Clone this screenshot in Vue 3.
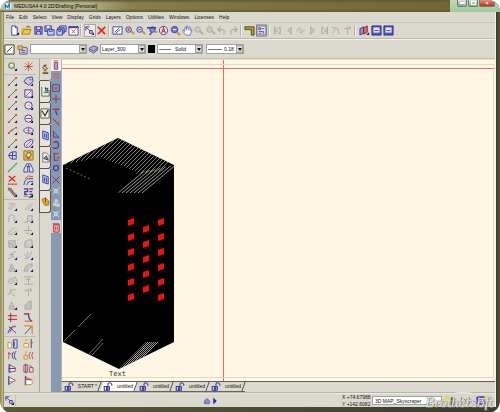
<script setup>
import { ref } from 'vue'

const N = '#3a3da6'
const R = '#e23c34'
const K = '#55555a'
const G = '#a9a8a2'
const Y = '#e0b020'
const L = '#c9cbee'

// Each glyph is a list of [path, stroke, fill, stroke width] on a 12 x 12 grid.
const mark = ['M11 8v3H8z', 'none', '#15156b']
const glyphs = {
  newDoc: [['M3 1h4l2 2v8H3z', N, '#fff'], ['M7 1v2h2', N, 'none'], mark],
  open: [['M1 10V4h3l1-1h4v2', Y, '#f5d76a'], ['M1 10l2-5h8l-2 5z', '#a87c10', '#f2c83c'], ['M6 2q3-2 4 1', N, 'none']],
  save: [['M2 2h8v8H2z', N, '#8c8fd8'], ['M4 2h4v3H4z', N, '#fff'], ['M4 10V7h4v3', N, L]],
  saveAs: [['M1 1h7v6H1z', N, '#8c8fd8'], ['M3 1h3v2H3z', 'none', '#fff'], ['M4 5h7v6H4z', N, L], ['M6 5h3v2H6z', N, '#fff']],
  saveAll: [['M4 1h7v6H4z', N, L], ['M2 3h7v6H2z', N, '#8c8fd8'], ['M1 5h6v6H1z', N, L], ['M3 5h2v2H3z', N, '#fff']],
  close: [['M1 2h10v9H1z', '#4a4a78', '#fff'], ['M1 2h10v1H1z', N, N], ['M4 5l4 4M8 5l-4 4', R, 'none']],
  select: [['M2 6V2h4M2 2l5 5', N, 'none'], ['M6 6h3v3H6z', N, L], mark],
  del: [['M2 2l8 8M10 2L2 10', '#e8261c', 'none', 1.8]],
  sheet: [['M1 2h10v8H1z', N, '#fff'], ['M3 8l5-5M4 9l5-4', N, 'none']],
  zoomIn: [['M8 5a3 3 0 1 1-6 0a3 3 0 1 1 6 0', N, L], ['M8 7l3 3', '#c09020', 'none', 2], ['M3.5 5h3M5 3.5v3', R, 'none']],
  zoomOut: [['M8 5a3 3 0 1 1-6 0a3 3 0 1 1 6 0', N, L], ['M8 7l3 3', '#c09020', 'none', 2], ['M3.5 5h3', R, 'none']],
  zoomBack: [['M9 5a3 3 0 1 1-6 0a3 3 0 1 1 6 0', N, '#8c8fd8'], ['M0 3h10M5 8l-2 3', N, 'none', 1.5], ['M8 7l3 1', '#c09020', 'none', 2]],
  zoomAll: [['M10.5 6a4.5 4.5 0 1 1-9 0a4.5 4.5 0 1 1 9 0', N, '#eceafc'], ['M4 9l2-6l2 6M5 7h3', R, 'none', 1.3]],
  zoomWin: [['M8.5 5a3.5 3.5 0 1 1-7 0a3.5 3.5 0 1 1 7 0', N, '#7679cf'], ['M8 8l3 3', '#c09020', 'none', 2], ['M3 5h4', '#fff', 'none']],
  pan: [['M4 11L1 7V5l2 2V3l1-1l1 3V1h1l1 4l1-3h1v4l1-1h1l-2 6z', '#5d60b8', '#f4f4ff', 0.8]],
  gZoom: [['M8 5a3 3 0 1 1-6 0a3 3 0 1 1 6 0', G, '#cbcac4'], ['M8 7l3 3', G, 'none', 2]],
  undo: [['M5 2L2 5l3 3M2 5h5q4 2 1 5', G, 'none', 1.2]],
  redo: [['M7 2l3 3l-3 3M10 5H5q-4 2-1 5', G, 'none', 1.2]],
  ruler: [['M1 2h10v9H8V5H1z', '#4a4418', '#b9a12c']],
  panel: [['M1 1h10v10H1z', '#4c4f86', '#e6e6f4'], ['M3 3h2v2H3zM6 4h3M3 7h5M3 9h3M8 7v2h1', '#4c4f86', 'none']],
  first: [['M3 2v8', G, 'none', 1.5], ['M9 2v8L4 6z', G, '#d8d7d0']],
  prev: [['M8 2v8L4 6z', G, '#c8c7c0']],
  loop: [['M2 7q0-3 3-3h1l-2-2M10 5q0 3-3 3H6l2 2M5 8l3-4', G, 'none']],
  next: [['M4 2v8l4-4z', G, '#c8c7c0']],
  last: [['M9 2v8', G, 'none', 1.5], ['M3 2v8l5-4z', G, '#d8d7d0']],
  walk: [['M2 3h5l3 3M3 9l3-5M8 3l2 7', G, 'none']],
  tee: [['M2 4l8-1M5 2l1 3v5M8 1l1 4', G, 'none']],
  cube: [['M1 4l4-2v7l-4 2z', N, '#8a8fc9'], ['M5 3l4-2v7L5 10z', '#8d2430', '#e86258'], mark],
  dialog: [['M1 1h10v10H1z', '#2c2f8c', '#5457b8'], ['M3 3h6v5H3z', '#b9bbed', '#eceeff'], ['M4 6h4', N, 'none']],
  // Drawing palette
  zoomPal: [['M8 5a3 3 0 1 1-6 0a3 3 0 1 1 6 0', '#6a9a60', '#dcead6', 1.5], ['M8 8l2 2', '#508048', 'none'], mark],
  burst: [['M2 2l8 8M10 2l-8 8M6 1v10M1 6h10', R, 'none', 0.8], ['M5 5h2v2H5z', 'none', '#a84c20']],
  line: [['M2 10l8-8', '#62627c', 'none'], ['M1 10h2M9 2h2', R, 'none', 1.8], mark],
  lineB: [['M1 9l8-6', '#62627c', 'none'], ['M1 9h2M4 6h2M9 3h2', R, 'none', 1.4], mark],
  ellPoly: [['M1 6l3-4l6-1l1 5l-5 4z', N, L], ['M2 8h2M7 4h2', R, 'none', 1.5], mark],
  rect: [['M2 2h8v8H2z', N, '#e7e7f7'], ['M3 9l6-6M2 2h2', R, 'none'], mark],
  circle: [['M10 6a4 4 0 1 1-8 0a4 4 0 1 1 8 0', N, '#e9e8f3'], ['M6 6h1M8 3h1', R, 'none', 1.6], mark],
  circleD: [['M10 6a4 4 0 1 1-8 0a4 4 0 1 1 8 0', N, '#e9e8f3'], ['M3 6h6', R, 'none', 1.2], mark],
  ellipse: [['M11 6a5 3 0 1 1-10 0a5 3 0 1 1 10 0', N, '#e0e0ef'], ['M6 2v8M4 6h4', '#c65a62', 'none'], mark],
  ellTilt: [['M2 9Q0 6 5 3q6-3 6 0q0 4-5 7q-4 1-4-1', N, '#e0e0ef'], ['M3 9l6-6', R, 'none'], mark],
  drum: [['M10 2H6Q2 3 2 6t4 4h4zM6 2v8M2 6h8', N, '#dadaf0']],
  bolt: [['M1 1h10v10H1z', '#947018', '#e9be42'], ['M3 7l2-4h3l1 3l-3 2zM4 9h4', '#5b4c38', '#f7e6a4']],
  green: [['M1 11L11 1', '#4fa15f', 'none', 1.3], ['M1 10h1M10 2h1', '#a0524a', 'none']],
  glasses: [['M4 2L1 8v3h4V7l1-4l1 4v4h4V8L8 2z', N, '#e0e0f3'], ['M4 5h4', N, 'none']],
  delLine: [['M2 1l7 6M9 1L2 7', '#e8261c', 'none', 1.5], ['M1 10h10M2 9v2M6 9v2M10 9v2', '#c4453f', 'none']],
  offset: [['M1 11q1-7 5-7h5M4 11q1-4 4-4h3', N, 'none'], ['M2 4l4-3l5 1', R, 'none'], mark],
  thick: [['M1 2q3 0 5 4l4 4', '#6d5d60', 'none', 3], ['M1 2q3 0 5 4l4 4', '#d79a94', 'none'], mark],
  chain: [['M1 2h4v3H2v3h3M7 2h4M7 5h3M7 8h3v3H6', N, 'none', 1.5], ['M1 10h4M7 2h2', R, 'none'], mark],
  g1: [['M1 9l7-7M3 10l7-7M2 3h5', G, 'none'], mark],
  g2: [['M2 10l7-8M5 10l6-7', G, 'none'], mark],
  g3: [['M2 10V5q0-3 3-3t3 3v4h2', G, 'none'], mark],
  g4: [['M1 10h4V3h5v6H6', G, '#cfcec8'], mark],
  g5: [['M1 9l8-7M6 10l5-5M2 10h4', G, 'none'], mark],
  g6: [['M1 6h9M6 1v6M3 9h4', G, 'none'], mark],
  g7: [['M2 3h7v7H2zM2 6h4v4', G, '#c9c8c2'], mark],
  g8: [['M2 10V6q0-4 5-4h3v8z', G, '#cfcec8'], mark],
  g9: [['M1 9q4 1 4-3t5-4M4 3l4 6M2 5h5', G, 'none'], mark],
  g10: [['M1 4l5 5M10 1L6 9H2M5 2v4', G, 'none'], mark],
  g11: [['M2 10l3-8l4 8zM4 7h3', G, '#c9c8c2'], mark],
  g12: [['M1 10q1-8 9-8v3q-5 0-5 5z', G, '#c9c8c2'], mark],
  g13: [['M1 7l3-4l3 3l-3 4zM6 4l3-2l2 4l-3 3', G, '#d2d1cb'], mark],
  g14: [['M1 2h10M1 10h10M6 2v8M3 5h5', G, 'none']],
  g15: [['M1 9q3-7 9-6M4 2v5l5 3', G, 'none']],
  g16: [['M2 10V8q0-5 7-7v9z', G, '#c2c1bb']],
  trim: [['M1 4h10M1 8h10', R, 'none', 1.3], ['M4 1v10', N, 'none']],
  fillet: [['M1 2h5q0 7 4 8', '#59488d', 'none', 1.5], ['M1 2h6M2 10h8', R, 'none']],
  split: [['M1 10q1-6 8-8M2 3l8 7M3 9l3-6', N, 'none'], ['M3 4h3M8 3h2', R, 'none']],
  chamfer: [['M1 2h9v9', '#d79727', 'none', 1.5], ['M2 11l7-8', N, 'none']],
  copyA: [['M1 5h4v6H1z', '#c39253', '#fff4d7'], ['M7 2h4v9H7zM8 4v5', N, '#d5d7f5']],
  copyB: [['M1 6h5v4H1zM3 6V2h3', '#d79727', '#fff4d7'], ['M9 1v10', N, 'none'], ['M8 5h3', R, 'none']],
  radA: [['M7 2q-3 4 0 8M10 1q-4 5 0 10', N, 'none'], ['M1 4h4M2 2v8', '#c24b45', 'none']],
  radB: [['M8 2q-3 4 0 8M11 2q-3 4 0 8', '#c24b45', 'none'], ['M1 6h4v4H1zM3 1v5', '#d79727', 'none']],
  fanA: [['M2 2l7 3v4l-7 1z', '#7d5374', '#f4e5e4'], ['M2 6h7M3 1v10', N, 'none']],
  fanB: [['M1 2h4v8H1zM7 5h4v5H7z', '#a74c52', '#f3d7c8'], ['M3 1v10M7 2l3 3', N, 'none']],
  fanC: [['M2 2l7 4l-7 4z', '#7d5374', '#fff'], ['M1 7h7', '#c49325', 'none'], ['M2 1v10', N, 'none']],
  fanD: [['M2 2l8 3v5l-8 1z', '#cf9140', '#fff'], ['M3 1v10M3 5h6', N, 'none'], ['M3 3l6 3', R, 'none']],
  // Palette tabs and snap strip
  pen: [['M3 10h6M4 8l4-3l-3-3l-2 2l4 4', '#97793a', '#ecdcb0', 1.3], ['M4 2l3-1M3 10h6', '#444', 'none', 1.3]],
  dim: [['M2 1v10h8V5H6V1', K, '#f4f4f0'], ['M4 7h5', '#4a934a', 'none', 2], ['M5 3h4M8 2v4', '#444', 'none']],
  vee: [['M1 1v10h9V1z', '#5c5850', '#f2eedf'], ['M2 3l4 6M9 2L5 9', '#3c3830', 'none', 1.4]],
  book: [['M3 1l6 2v8l-6-2z', N, '#b9bdec'], ['M5 4v4M7 4v5', N, 'none']],
  pageS: [['M3 1h4l3 3v7H3z', '#707078', '#f4f4f4'], ['M4 7l3-3l2 5z', '#444', '#888']],
  hand: [['M2 4l4-2l4 4l-1 4H5z', '#a96c12', '#eba52c'], ['M6 2v5', '#6e4712', 'none']],
  snapBox: [['M4 3h4v8H4z', N, '#f7c8c4'], ['M3 1h6M6 2v8', R, 'none']],
  snapDot: [['M4 4h4v4H4z', R, '#e8c2d2'], ['M6 5v2', N, 'none']],
  snapSq: [['M2 2h8v8H2z', N, 'none'], ['M5 5h2v2H5z', R, R]],
  snapX: [['M6 1v10M1 6h10', N, 'none'], ['M5 5h2v2H5z', R, R]],
  snapT: [['M2 4h8M6 4q-1 4 2 7', N, 'none', 1.3], ['M5 3h2v2H5z', R, R]],
  snapL: [['M2 2l8 8', N, 'none'], ['M4 5h2M7 7h2', R, 'none', 2]],
  snapA: [['M3 2v8h7M3 3l6 7', N, 'none'], ['M3 9h2', R, 'none', 2]],
  snapC: [['M3 3q6-3 6 3t-7 3', N, 'none', 1.5], ['M2 3h2M2 9h2', R, 'none', 1.5]],
  snapP: [['M4 2h5M4 10h5M4 1v10', N, 'none'], ['M3 4h2M7 7h3', R, 'none', 2]],
  snapO: [['M9 6a3 3 0 1 1-6 0a3 3 0 1 1 6 0', N, 'none', 1.5], ['M7 3h3', R, 'none', 2]],
  snapW: [['M2 2l8 8M10 2l-8 8', '#d4dae2', 'none'], ['M4 4h4v4H4z', '#d4dae2', '#b5c0ce']],
  snapWR: [['M2 2l8 8M10 2l-8 8', N, 'none'], ['M5 5h2v2H5z', R, R]],
  snapG: [['M5 2h3v3H5zM3 6h3v3H3zM7 7h3v3H7z', '#d4dae2', '#b5c0ce']],
  tin: [['M3 3h6v8H3zM2 2h7', '#a6282e', '#f1b9b4'], ['M5 5v4M7 5v4', R, 'none']],
  prop: [['M3 4h8v7H3z', '#574f83', '#dcdcf0'], ['M1 2h5v4H1z', '#a37c23', '#e4b84c'], ['M5 7h4M5 9h4', N, 'none']],
  stack: [['M1 7l5-3l5 2l-5 4z', '#55588f', '#c3c5e6'], ['M1 5l5-3l5 2l-5 4z', '#55588f', '#a9acd6']],
  style: [['M1 1h10v10H1z', '#333', '#f5f5ef'], ['M3 9l6-6', '#333', 'none', 1.2]],
  tab: [['M4 6h4v5H4z', N, '#8f92dd', 1.3], ['M1 6h4v5H1zM6 5V3q0-2 2-2t3 2v2', N, 'none', 1.5]],
  home: [['M2 6l4-4l4 4v4H2z', '#5557a6', '#8a8cc8']],
  play: [['M4 2v8l4-4z', '#1c1cb0', '#1c1cb0']],
  star: [['M5 0v10M0 5h10M1 1l8 8M9 1L1 9', '#efe93c', 'none', 1.5], ['M8 3h3v8H8z', N, '#7c80cf']],
  xy: [['M2 2q-2 4 0 8M10 2q2 4 0 8M4 4l4 4M8 4L4 8', '#77777c', 'none']],
  win: [['M1 2h9v8H1z', '#24279a', '#5c60d0'], ['M3 4h4v4H3z', '#fff', 'none'], ['M10 1v6M7 4h5', '#efe93c', 'none', 1.5]]
}

const menus = ['File', 'Edit', 'Select', 'View', 'Display', 'Grids', 'Layers', 'Options', 'Utilities', 'Windows', 'Licenses', 'Help']
const bars = [
  ['newDoc', 'open', 'save', 'saveAs', 'saveAll', 'close'],
  ['select', 'del'],
  ['sheet', 'zoomIn', 'zoomOut', 'zoomBack', 'zoomAll', 'zoomWin', 'pan', 'gZoom', 'gZoom', 'undo', 'redo'],
  ['ruler', 'panel'],
  ['first', 'prev', 'loop', 'next', 'last', 'walk', 'tee'],
  ['cube', 'dialog', 'dialog']
]
const palettes = [
  ['zoomPal', 'burst'],
  ['line', 'ellPoly', 'line', 'rect', 'line', 'circle', 'line', 'circleD', 'lineB', 'ellipse', 'line', 'ellTilt', 'drum', 'bolt', 'green', 'glasses', 'delLine', 'offset', 'thick', 'chain'],
  ['g1', 'g2', 'g3', 'g4', 'g5', 'g6', 'g7', 'g8', 'g9', 'g10', 'g11', 'g12', 'g13', 'g14', 'g15', 'tee', 'g11', 'g16', 'trim', 'fillet', 'split', 'chamfer'],
  ['copyA', 'copyB', 'radA', 'radB', 'fanA', 'fanB', 'fanC', 'fanD']
]
const sideTabs = ['pen', 'dim', 'vee', 'book', 'pageS', 'book', 'hand']
const snaps = ['snapBox', 'snapDot', 'snapSq', 'snapX', 'snapT', 'snapL', 'snapA', 'snapC', 'snapP', 'snapO', 'snapWR', 'snapW', 'snapG', 'snapW']
const sheets = ['START *', 'untitled', 'untitled', 'untitled', 'untitled']
const active = ref(1)
const nameField = ref('3D MAP_Skyscraper')

const seq = (n) => Array.from({ length: n }, (_, i) => i)
const windows = [
  ...seq(6).flatMap((i) => [[128, 220 + i * 15], [158, 220 + i * 15]]),
  ...seq(5).map((i) => [143, 227 + i * 15])
]
const windowPath = ([x, y]) => `M${x} ${y}l6-2v6l-6 2z`
</script>

<template>
  <div class="window">
    <header class="title">
      <svg class="icon" viewBox="0 0 12 12" aria-hidden="true"><path d="M1 2h10v9H1z" fill="#e8f4fa" /><path d="M2 10V4l3 4l3-5v7" fill="none" stroke="#2585b5" stroke-width="2" /></svg>
      <h1>MEDUSA4 4.0 2D/Drafting [Personal]</h1>
      <div class="caption">
        <button aria-label="Minimize"><i class="min"></i></button>
        <button aria-label="Maximize"><i class="max"></i></button>
        <button class="quit" aria-label="Close">×</button>
      </div>
    </header>
    <div class="body">
      <nav class="menu"><button v-for="m in menus" :key="m">{{ m }}</button></nav>
      <div class="toolbar">
        <div v-for="(b, i) in bars" :key="i" class="group" :class="'n' + b.length">
          <button v-for="(g, j) in b" :key="j" :aria-label="g" :class="{ pressed: g === 'select' || g === 'panel' }">
            <svg class="icon" viewBox="0 0 12 12"><path v-for="(p, k) in glyphs[g]" :key="k" :d="p[0]" :stroke="p[1]" :fill="p[2]" :stroke-width="p[3] || 1" /></svg>
          </button>
        </div>
      </div>
      <div class="options">
        <button class="style" aria-label="Style"><svg class="icon" viewBox="0 0 12 12"><path v-for="(p, k) in glyphs.style" :key="k" :d="p[0]" :stroke="p[1]" :fill="p[2]" /></svg></button>
        <button class="props" aria-label="Properties"><svg class="icon" viewBox="0 0 12 12"><path v-for="(p, k) in glyphs.prop" :key="k" :d="p[0]" :stroke="p[1]" :fill="p[2]" /></svg></button>
        <div class="combo wide"><select aria-label="Property set"><option></option></select><span class="drop"></span></div>
        <button class="layers" aria-label="Layers"><svg class="icon" viewBox="0 0 12 12"><path v-for="(p, k) in glyphs.stack" :key="k" :d="p[0]" :stroke="p[1]" :fill="p[2]" /></svg></button>
        <div class="combo"><select aria-label="Layer"><option>Layer_500</option></select><span class="drop"></span></div>
        <button class="swatch" aria-label="Colour"></button>
        <div class="combo"><i class="sample"></i><select aria-label="Line style"><option>Solid</option></select><span class="drop"></span></div>
        <div class="combo narrow"><i class="sample long"></i><select aria-label="Line width"><option>0.18</option></select><span class="drop"></span></div>
      </div>
      <div class="work">
        <aside class="palette">
          <div v-for="(b, i) in palettes" :key="i" class="tools" :class="'p' + i">
            <button v-for="(g, j) in b" :key="j" :aria-label="g">
              <svg class="icon" viewBox="0 0 12 12"><path v-for="(p, k) in glyphs[g]" :key="k" :d="p[0]" :stroke="p[1]" :fill="p[2]" :stroke-width="p[3] || 1" /></svg>
            </button>
          </div>
        </aside>
        <div class="side">
          <button v-for="(g, j) in sideTabs" :key="j" :aria-label="g" :class="{ on: j === 0 }">
            <svg class="icon" viewBox="0 0 12 12"><path v-for="(p, k) in glyphs[g]" :key="k" :d="p[0]" :stroke="p[1]" :fill="p[2]" :stroke-width="p[3] || 1" /></svg>
          </button>
        </div>
        <div class="strip">
          <div class="snaps">
            <button v-for="(g, j) in snaps" :key="j" :aria-label="g" :class="{ lit: j === 0 }">
              <svg class="icon" viewBox="0 0 12 12"><path v-for="(p, k) in glyphs[g]" :key="k" :d="p[0]" :stroke="p[1]" :fill="p[2]" :stroke-width="p[3] || 1" /></svg>
            </button>
          </div>
          <button class="tin" aria-label="Clear"><svg class="icon" viewBox="0 0 12 12"><path v-for="(p, k) in glyphs.tin" :key="k" :d="p[0]" :stroke="p[1]" :fill="p[2]" /></svg></button>
        </div>
        <main class="view">
          <div class="sheet">
            <svg class="drawing" role="img" aria-label="Skyscraper drawing">
              <defs>
                <clipPath id="roof"><path d="M118 138L174 165L172 170L134 174L138 172L100 157L68 164L63 165z" /></clipPath>
                <clipPath id="rightRoof"><path d="M135 173L174 165L174 168L143 193L118 193z" /></clipPath>
                <clipPath id="foot"><path d="M146 342h28L119 369z" /></clipPath>
              </defs>
              <g transform="translate(-62 -60)">
                <path d="M118 138L174 165V342L119 369L63 342V165z" fill="#000" />
                <g clip-path="url(#roof)" stroke="#a5a29a" stroke-width="0.8">
                  <path v-for="i in seq(26)" :key="i" :d="`M${52 + i * 4} 178l46 -46`" />
                </g>
                <g clip-path="url(#rightRoof)" stroke="#c4c1b9" stroke-width="0.8">
                  <path v-for="i in seq(7)" :key="i" :d="`M${118 + i * 4} 193l36 -30`" />
                </g>
                <path d="M66 168l24 11" stroke="#77746e" stroke-dasharray="2 2" />
                <g clip-path="url(#foot)" stroke="#c4c1b9" stroke-width="0.8">
                  <path v-for="i in seq(7)" :key="i" :d="`M${119 + i * 4} ${369 - i * 2}l28 -28`" />
                </g>
                <path d="M64 341l11-11M78 327l13-13M89 354l14-15M92 355l11-12" stroke="#8d8a84" stroke-width="0.8" />
                <path v-for="(w, i) in windows" :key="i" :d="windowPath(w)" fill="#f01010" />
                <text x="109" y="376" class="label">Text</text>
              </g>
            </svg>
            <div class="axis across"></div>
            <div class="axis down"></div>
          </div>
          <div class="tabs" role="tablist">
            <button v-for="(s, i) in sheets" :key="i" role="tab" :class="{ active: i === active }" :aria-selected="i === active" @click="active = i">
              <svg class="icon" viewBox="0 0 12 12"><path v-for="(p, k) in glyphs.tab" :key="k" :d="p[0]" :stroke="p[1]" :fill="p[2]" :stroke-width="p[3] || 1" /></svg>
              <span>{{ s }}</span>
            </button>
          </div>
        </main>
      </div>
      <footer class="status">
        <button aria-label="Pick"><svg class="icon" viewBox="0 0 12 12"><path v-for="(p, k) in glyphs.select" :key="k" :d="p[0]" :stroke="p[1]" :fill="p[2]" /></svg></button>
        <div class="nav">
          <button v-for="g in ['home', 'play']" :key="g" :aria-label="g"><svg class="small" viewBox="0 0 12 12"><path v-for="(p, k) in glyphs[g]" :key="k" :d="p[0]" :stroke="p[1]" :fill="p[2]" /></svg></button>
        </div>
        <div class="coords"><span>X +74.67988</span><span>Y +142.6082</span></div>
        <input v-model="nameField" aria-label="Drawing name" />
        <div class="tray">
          <button v-for="g in ['star', 'xy', 'win']" :key="g" :aria-label="g"><svg class="icon" viewBox="0 0 12 12"><path v-for="(p, k) in glyphs[g]" :key="k" :d="p[0]" :stroke="p[1]" :fill="p[2]" :stroke-width="p[3] || 1" /></svg></button>
        </div>
      </footer>
    </div>
    <div class="watermark">
      <svg viewBox="0 0 74 10" aria-hidden="true"><path d="M20 9Q38-5 55 9Q38 0 20 9" fill="#fff" stroke="#a9a7a0" stroke-width="0.5" /></svg>
      <span>Brothersoft</span>
    </div>
  </div>
</template>

<style>
body { margin: 0; background: #fff; }
</style>

<style scoped>
* { box-sizing: border-box; }
button { font: inherit; color: inherit; border: 0; padding: 0; margin: 0; background: none; display: grid; place-items: center; min-width: 0; min-height: 0; white-space: nowrap; }
.icon { width: 11px; height: 11px; display: block; overflow: visible; }
.small { width: 8px; height: 8px; display: block; }
.window {
  position: relative; min-height: 100vh; display: flex; flex-direction: column; padding: 0 4px 6px;
  border-radius: 12px; overflow: hidden; font: 5px/7px "Liberation Sans", Arial, sans-serif; color: #111;
  background: linear-gradient(90deg, #8d8850 0, #c9c394 3px, #5e5a2e 4px, #4c4b36 50%, #3c3b2c 496px, #55533f 100%);
}
.title { height: 12px; margin: 0 -4px; padding-left: 4px; display: flex; align-items: center; gap: 2px; background: linear-gradient(180deg, #5d5838, transparent 3px, transparent 9px, #5c5638), linear-gradient(90deg, #c5c3a6 0, #b3ae84 90px, #86804a 130px, #7a7038 300px, #6f6431 100%); }
.title .icon { width: 8px; height: 8px; }
.title h1 { margin: 0; flex: 1; font-size: 5px; font-weight: 400; color: #000; white-space: nowrap; }
.caption { align-self: stretch; display: flex; align-items: flex-start; gap: 1px; padding: 0 5px 0 7px; background: linear-gradient(180deg, #c2d8b8, #9fcb98); }
.caption button { width: 10px; height: 7px; border: 1px solid #6d8170; border-top: 0; border-radius: 0 0 2px 2px; background: linear-gradient(#dbe4d8, #8ea390); }
.caption .quit { width: 16px; background: linear-gradient(#e2907c, #b53220); color: #fff; font-weight: 700; line-height: 6px; }
.min { width: 5px; height: 2px; background: #fff; }
.max { width: 5px; height: 4px; border: 1px solid #fff; }
.body { flex: 1; display: flex; flex-direction: column; background: #dbd8ce; border-right: 1px solid #f5f3ec; }
.menu { height: 10px; display: flex; align-items: center; gap: 5px; padding-left: 2px; }
.toolbar { height: 17px; display: flex; align-items: center; gap: 5px; padding-left: 5px; border-top: 1px solid #c8c5bb; border-bottom: 1px solid #b9b6ac; }
.group { display: grid; grid-auto-flow: column; grid-auto-columns: 1fr; position: relative; height: 13px; }
.group + .group::before { content: ""; position: absolute; left: -4px; top: 1px; bottom: 1px; border-left: 1px solid #b5b2a8; border-right: 1px solid #f4f2ea; }
.n2 { width: 23px; }
.n3 { width: 36px; }
.n6 { width: 70px; }
.n7 { width: 81px; }
.n11 { width: 127px; }
.pressed { background: #eeece5; box-shadow: 0 0 0 1px #aaa79d inset; }
.options { height: 20px; display: flex; align-items: center; border-top: 1px solid #f4f2ea; border-bottom: 1px solid #c2bfb5; }
.style { margin: 0 2px 0 0; }
.props { margin-right: 2px; }
.layers { margin: 0 1px; }
.combo { display: flex; align-items: center; width: 46px; height: 10px; border: 1px solid #9aa2ac; background: #fff; }
.combo.wide { width: 57px; }
.combo.narrow { width: 38px; margin-left: 3px; }
.combo select { appearance: none; flex: 1; min-width: 0; border: 0; margin: 0; padding: 0 0 0 1px; background: none; font: inherit; color: #111; }
.sample { width: 12px; border-top: 1px solid #777; margin: 0 3px 0 1px; }
.sample.long { width: 14px; margin-right: 1px; }
.drop { width: 7px; height: 8px; background: #dbd8ce; border: 1px solid #a5a299; display: grid; place-items: center; pointer-events: none; }
.drop::after { content: ""; border: 2px solid transparent; border-top: 3px solid #111; border-bottom: 0; }
.swatch { width: 7px; height: 8px; margin: 0 2px; background: #000; }
.work { flex: 1; display: flex; border-bottom: 1px solid #b7b4aa; }
.palette { width: 36px; padding: 0 3px 4px 0; border-right: 1px solid #a9a69c; display: flex; flex-direction: column; }
.tools { display: grid; grid-template-columns: 1fr 1fr; grid-auto-rows: 1fr; }
.p0 { height: 16px; border-bottom: 1px solid #bfbcb2; }
.p1 { height: 125px; border-bottom: 1px solid #bfbcb2; }
.p2 { height: 137px; border-bottom: 1px solid #bfbcb2; }
.p3 { height: 50px; }
.side { width: 11px; display: flex; flex-direction: column; }
.side button { height: 22px; border: 1px solid #55534c; border-left: 0; border-top: 0; border-radius: 0 0 3px 0; background: #e6e3da; box-shadow: -1px 0 0 #55534c; }
.side .on { border-right: 0; background: none; box-shadow: none; }
.strip { width: 11px; background: #8799ae; border-right: 1px solid #a9b5c4; }
.snaps { display: grid; grid-auto-rows: 1fr; height: 162px; border-bottom: 1px solid #c9d0d8; }
.snaps .icon { width: 10px; height: 10px; }
.lit { background: #f3f0e6; }
.tin { width: 10px; height: 12px; background: #cfd3d8; }
.view { flex: 1; min-width: 0; display: flex; flex-direction: column; }
.sheet { flex: 1; display: flex; min-height: 0; background: #fff6e3; border-bottom: 1px solid #5f5d55; border-top: 1px solid #e8e2d0; position: relative; }
.sheet::after { content: ""; position: absolute; inset: 4px 1px 3px 0; border: 1px solid #dfd9c8; border-left: 0; pointer-events: none; }
.drawing { flex: 1; width: 100%; height: 321px; }
.axis { position: absolute; background: #f0685c; }
.across { left: 0; right: 0; top: 8px; height: 1px; }
.down { top: 0; bottom: 0; left: 161px; width: 1px; }
.label { font: 7px "DejaVu Sans Mono", "Liberation Mono", monospace; fill: #333; }
.tabs { height: 10px; display: flex; }
.tabs button { position: relative; display: flex; align-items: center; justify-content: space-between; width: 36px; padding: 0 4px 0 2px; border-bottom: 1px solid #66645c; isolation: isolate; }
.tabs button:first-child { width: 39px; }
.tabs button::before { content: ""; position: absolute; inset: 0 1px 0 1px; z-index: -1; border-right: 1px solid #55534c; transform: skewX(-20deg); }
.tabs .active::before { background: #fff; }
.tabs .icon { width: 10px; height: 9px; }
.status { height: 14px; display: flex; align-items: center; padding-right: 8px; border-top: 1px solid #ebe9e1; }
.status > button { width: 12px; border-right: 1px solid #c5c2b8; }
.nav { flex: 1; display: flex; justify-content: center; padding-left: 63px; }
.coords { flex: none; display: flex; flex-direction: column; width: 30px; white-space: nowrap; }
.status input { width: 70px; height: 9px; padding: 0 2px; border: 1px solid #9aa2ac; background: #fff; font: inherit; color: #111; border-radius: 0; }
.tray { display: flex; gap: 5px; padding-left: 2px; }
.watermark { position: absolute; right: 1px; bottom: 2px; width: 74px; pointer-events: none; color: rgba(255, 255, 255, 0.85); font: italic 15px/18px "Liberation Serif", serif; text-shadow: 0 0 1px #66645c, 1px 1px 1px #8d8b82; }
.watermark svg { position: absolute; left: 0; top: -4px; width: 100%; opacity: 0.7; }
</style>
